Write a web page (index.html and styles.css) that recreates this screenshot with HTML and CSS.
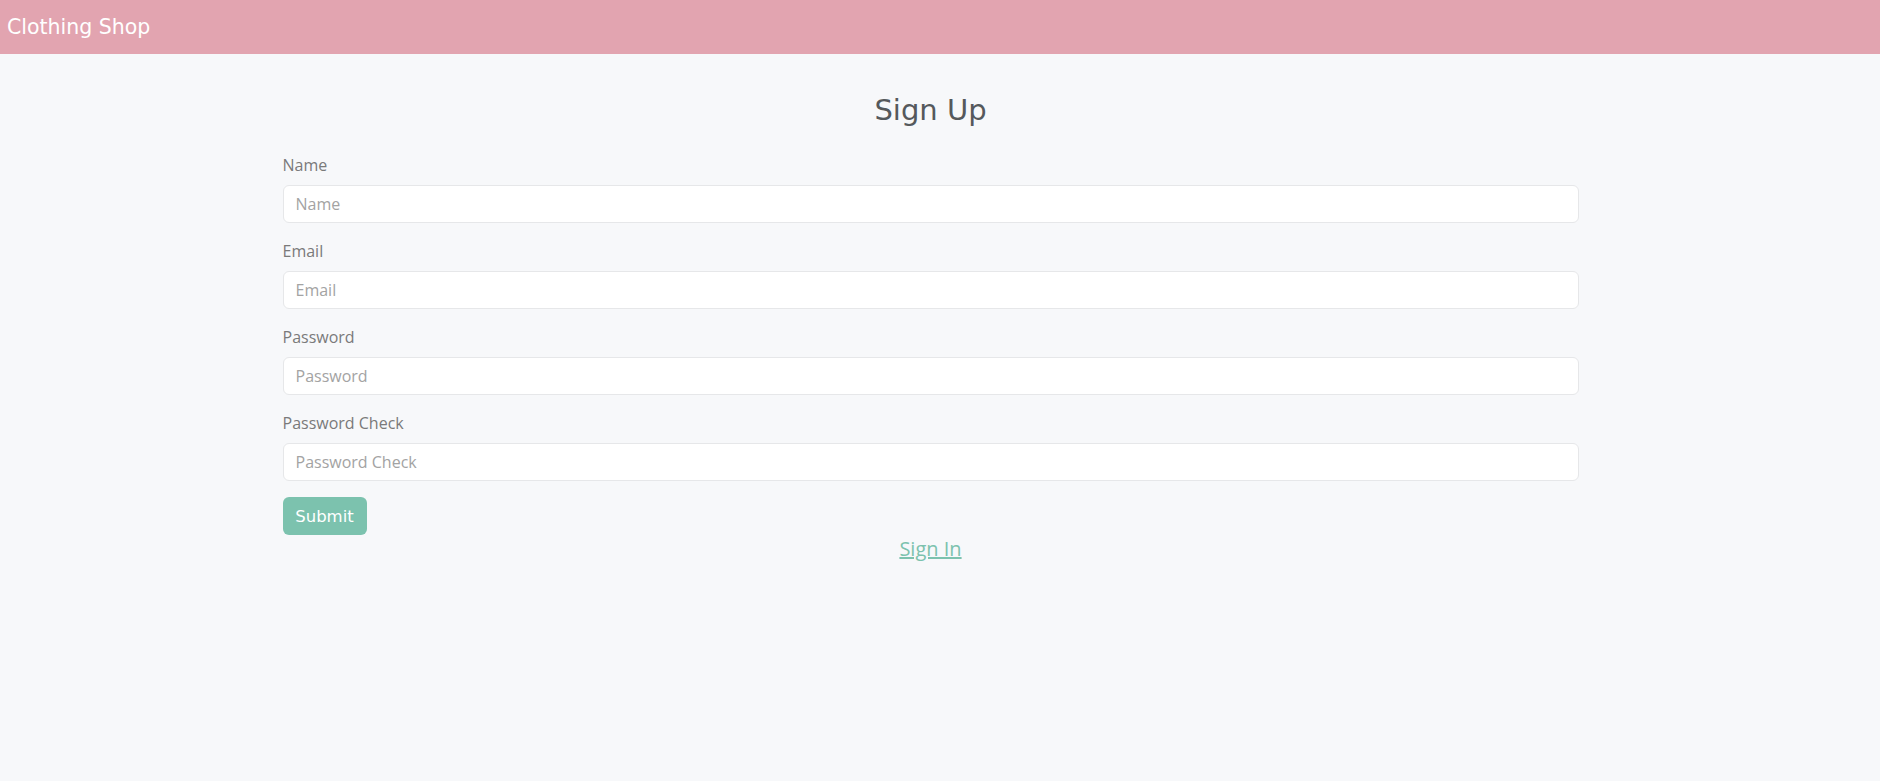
FILE: index.html
```html
<!DOCTYPE html>
<html lang="en">
<head>
<meta charset="utf-8">
<title>Sign Up - Clothing Shop</title>
<link rel="stylesheet" href="styles.css">
</head>
<body>
<header class="navbar">
  <a class="brand" href="#">Clothing Shop</a>
</header>
<main class="page">
  <div class="container">
    <h2 class="title">Sign Up</h2>
    <form class="form">
      <div class="group">
        <label class="label" for="name">Name</label>
        <input class="input" id="name" type="text" placeholder="Name">
      </div>
      <div class="group">
        <label class="label" for="email">Email</label>
        <input class="input" id="email" type="email" placeholder="Email">
      </div>
      <div class="group">
        <label class="label" for="pw">Password</label>
        <input class="input" id="pw" type="password" placeholder="Password">
      </div>
      <div class="group">
        <label class="label" for="pw2">Password Check</label>
        <input class="input" id="pw2" type="password" placeholder="Password Check">
      </div>
      <button class="btn" type="button">Submit</button>
    </form>
    <div class="alt">
      <a class="link" href="#">Sign In</a>
    </div>
  </div>
</main>
</body>
</html>
```
FILE: styles.css
```css
* { box-sizing: border-box; }
html, body { margin: 0; padding: 0; }
body {
  background: #f7f8fa;
  font-family: "Open Sans", "Noto Sans", sans-serif;
  height: 781px;
  overflow: hidden;
}
.navbar {
  height: 54px;
  background: #e2a4b0;
  display: flex;
  align-items: center;
  padding-left: 7px;
}
.brand {
  font-family: "DejaVu Sans", sans-serif;
  font-size: 20.5px;
  color: #fff;
  text-decoration: none;
}
.page {
  padding-right: 19px;
}
.container {
  width: 1296px;
  margin: 0 auto;
}
.title {
  font-family: "DejaVu Sans", sans-serif;
  font-weight: 400;
  font-size: 29px;
  line-height: 36px;
  color: #55595c;
  text-align: center;
  margin: 0;
  padding-top: 38px;
}
.form {
  margin-top: 25px;
}
.group {
  display: flex;
  flex-direction: column;
  margin-bottom: 16px;
}
.label {
  font-size: 16px;
  line-height: 24px;
  color: #7a7a7a;
  margin-bottom: 8px;
}
.input {
  height: 38px;
  border: 1px solid #e6e7e9;
  border-radius: 6px;
  background: #fff;
  padding: 0 12px;
  font-family: "Open Sans", "Noto Sans", sans-serif;
  font-size: 16px;
  color: #555;
  outline: none;
}
.input::placeholder { color: #a3a3a3; }
.btn {
  display: block;
  height: 38px;
  width: 84px;
  border: none;
  border-radius: 6px;
  background: #7cc2ae;
  color: #fff;
  font-family: "DejaVu Sans", sans-serif;
  font-size: 16.5px;
  padding: 0;
  margin-top: 0;
}
.alt {
  text-align: center;
  margin-top: 0;
}
.link {
  font-size: 20px;
  line-height: 28px;
  color: #7cc2ae;
  text-decoration: underline;
}
```
